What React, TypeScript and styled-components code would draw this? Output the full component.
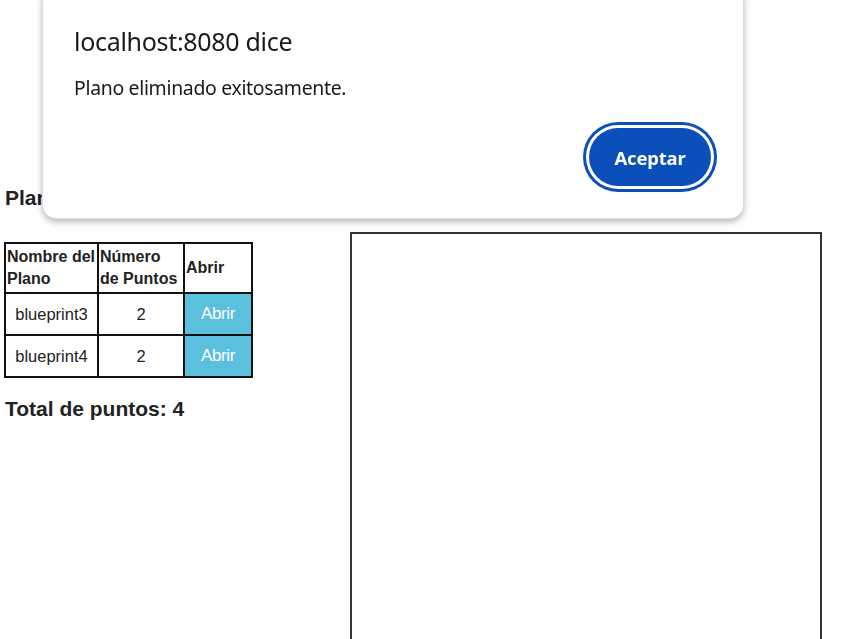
import React from "react";
import styled, { createGlobalStyle } from "styled-components";

const GlobalStyle = createGlobalStyle`
  html, body { margin: 0; padding: 0; background: #fff; }
  body { font-family: "Liberation Sans", Arial, sans-serif; color: #222; overflow: hidden; }
  *, *::before, *::after { box-sizing: border-box; }
`;

const Page = styled.div`
  display: flex;
  align-items: flex-start;
  padding-left: 4px;
  height: 639px;
  overflow: hidden;
`;

const LeftCol = styled.div`
  width: 346px;
  padding-top: 184px;
  display: flex;
  flex-direction: column;
  align-items: flex-start;
`;

const Heading = styled.h3`
  margin: 0 0 0 1px;
  font-size: 21px;
  line-height: 28px;
  font-weight: bold;
  color: #222;
  white-space: nowrap;
`;

const Table = styled.table`
  margin-top: 30px;
  border-collapse: collapse;
  border: 2px solid #111;
  table-layout: fixed;
`;

const Th = styled.th<{ $w: number }>`
  width: ${(p) => p.$w}px;
  height: 50px;
  padding: 0 0 0 1px;
  border: 2px solid #111;
  font-size: 16px;
  line-height: 22px;
  font-weight: bold;
  text-align: left;
  color: #222;
  white-space: nowrap;
  overflow: hidden;
`;

const Td = styled.td`
  height: 42px;
  padding: 0;
  border: 2px solid #111;
  font-size: 16.5px;
  text-align: center;
  color: #222;
`;

const ButtonCell = styled.td`
  height: 42px;
  padding: 0;
  border: 2px solid #111;
`;

const OpenButton = styled.button`
  display: block;
  width: 100%;
  height: 40px;
  border: none;
  margin: 0;
  background: #5bc0de;
  color: #fff;
  font-family: "Liberation Sans", Arial, sans-serif;
  font-size: 17px;
  letter-spacing: -0.4px;
  cursor: pointer;
`;

const Total = styled.h3`
  margin: 17px 0 0 1px;
  font-size: 21px;
  line-height: 28px;
  font-weight: bold;
  color: #222;
`;

const Canvas = styled.div`
  margin-top: 232px;
  width: 472px;
  height: 440px;
  border: 2px solid #333;
  background: #fff;
  flex: none;
`;

const Dialog = styled.div`
  position: fixed;
  left: 42px;
  top: -14px;
  width: 702px;
  border: 1px solid #dcdcdc;
  border-radius: 14px;
  background: #fff;
  box-shadow: 0 3px 6px rgba(0, 0, 0, 0.28);
  padding: 38px 26px 32px 31px;
  display: flex;
  flex-direction: column;
  font-family: "Noto Sans", "Open Sans", sans-serif;
`;

const DialogTitle = styled.div`
  font-size: 25px;
  line-height: 32px;
  color: #1a1a1a;
  letter-spacing: -0.3px;
`;

const DialogMessage = styled.div`
  margin-top: 18px;
  font-size: 19.4px;
  line-height: 26px;
  color: #1a1a1a;
  letter-spacing: -0.3px;
`;

const Actions = styled.div`
  margin-top: 27px;
  display: flex;
  justify-content: flex-end;
  padding-right: 6px;
`;

const AcceptButton = styled.button`
  width: 122px;
  height: 58px;
  border: none;
  border-radius: 29px;
  background: #0b4fba;
  color: #fff;
  font-family: "Noto Sans", "Open Sans", sans-serif;
  font-size: 18.5px;
  font-weight: bold;
  letter-spacing: -0.2px;
  box-shadow: 0 0 0 3px #fff, 0 0 0 6px #0b4fba;
  cursor: pointer;
`;

const rows = [
  { name: "blueprint3", points: 2 },
  { name: "blueprint4", points: 2 },
];

export default function App() {
  const total = rows.reduce((s, r) => s + r.points, 0);
  return (
    <>
      <GlobalStyle />
      <Page>
        <LeftCol>
          <Heading>Planos del autor</Heading>
          <Table>
            <thead>
              <tr>
                <Th $w={93}>
                  Nombre del
                  <br />
                  Plano
                </Th>
                <Th $w={86}>
                  Número
                  <br />
                  de Puntos
                </Th>
                <Th $w={68}>Abrir</Th>
              </tr>
            </thead>
            <tbody>
              {rows.map((r) => (
                <tr key={r.name}>
                  <Td>{r.name}</Td>
                  <Td>{r.points}</Td>
                  <ButtonCell>
                    <OpenButton>Abrir</OpenButton>
                  </ButtonCell>
                </tr>
              ))}
            </tbody>
          </Table>
          <Total>Total de puntos: {total}</Total>
        </LeftCol>
        <Canvas />
      </Page>
      <Dialog>
        <DialogTitle>localhost:8080 dice</DialogTitle>
        <DialogMessage>Plano eliminado exitosamente.</DialogMessage>
        <Actions>
          <AcceptButton>Aceptar</AcceptButton>
        </Actions>
      </Dialog>
    </>
  );
}
